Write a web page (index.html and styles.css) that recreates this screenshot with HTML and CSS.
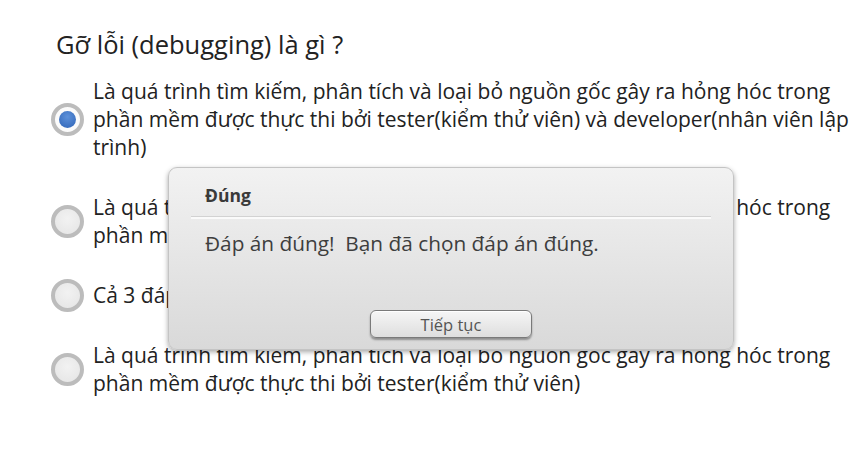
FILE: index.html
```html
<!DOCTYPE html>
<html lang="vi">
<head>
<meta charset="utf-8">
<link rel="stylesheet" href="styles.css">
</head>
<body>
<div class="quiz">
  <div class="question">Gỡ lỗi (debugging) là gì ?</div>
  <div class="options">
    <label class="option">
      <span class="radio checked"><span class="dot"></span></span>
      <span class="text">Là quá trình tìm kiếm, phân tích và loại bỏ nguồn gốc gây ra hỏng hóc trong phần mềm được thực thi bởi tester(kiểm thử viên) và developer(nhân viên lập trình)</span>
    </label>
    <label class="option">
      <span class="radio"></span>
      <span class="text">Là quá trình tìm kiếm, phân tích và loại bỏ nguồn gốc gây ra hỏng hóc trong phần mềm được thực thi bởi developer(nhân viên lập trình)</span>
    </label>
    <label class="option">
      <span class="radio"></span>
      <span class="text">Cả 3 đáp án đều sai</span>
    </label>
    <label class="option">
      <span class="radio"></span>
      <span class="text">Là quá trình tìm kiếm, phân tích và loại bỏ nguồn gốc gây ra hỏng hóc trong phần mềm được thực thi bởi tester(kiểm thử viên)</span>
    </label>
  </div>
</div>
<div class="dialog">
  <div class="dialog-title">Đúng</div>
  <div class="dialog-sep"></div>
  <div class="dialog-msg">Đáp án đúng!&nbsp; Bạn đã chọn đáp án đúng.</div>
  <div class="dialog-actions"><button class="btn">Tiếp tục</button></div>
</div>
</body>
</html>
```
FILE: styles.css
```css
html, body {
  margin: 0;
  padding: 0;
  background: #fff;
}
body {
  font-family: "Open Sans", "Noto Sans", sans-serif;
  color: #222;
  width: 863px;
  height: 453px;
  overflow: hidden;
  position: relative;
}
.quiz {
  padding: 26px 0 0 56px;
}
.question {
  font-size: 25.5px;
  line-height: 36px;
  color: #222;
}
.options {
  display: flex;
  flex-direction: column;
  gap: 32px;
  margin-top: 15px;
  width: 804px;
}
.option {
  display: flex;
  align-items: center;
  gap: 9px;
}
.radio {
  flex: none;
  box-sizing: border-box;
  width: 33px;
  height: 33px;
  margin: -3px 0 -3px -5px;
  border-radius: 50%;
  border: 4px solid #bcbcbc;
  background: radial-gradient(circle at 50% 40%, #f2f2f2, #e4e4e4);
  display: flex;
  align-items: center;
  justify-content: center;
}
.radio.checked {
  background: #fbfbfb;
}
.radio .dot {
  width: 17px;
  height: 17px;
  border-radius: 50%;
  background: radial-gradient(circle at 50% 35%, #5d91da, #2e63b6);
}
.text {
  font-size: 21px;
  line-height: 28px;
  color: #222;
}
.dialog {
  position: absolute;
  left: 168px;
  top: 167px;
  width: 566px;
  height: 183px;
  box-sizing: border-box;
  border: 1px solid #c4c4c4;
  border-radius: 9px;
  background: linear-gradient(#f2f2f2, #d9d9d9);
  box-shadow: 0 2px 5px rgba(0,0,0,0.35);
  display: flex;
  flex-direction: column;
  padding: 14px 22px 10px 22px;
}
.dialog-title {
  font-weight: bold;
  font-size: 17.5px;
  line-height: 26px;
  color: #3a3a3a;
  padding-left: 14px;
}
.dialog-sep {
  height: 2px;
  background: #fafafa;
  border-top: 1px solid #d2d2d2;
  margin-top: 8px;
}
.dialog-msg {
  font-size: 20.8px;
  line-height: 30px;
  color: #3e3e3e;
  padding-left: 14px;
  margin-top: 9px;
}
.dialog-actions {
  margin-top: auto;
  display: flex;
  justify-content: center;
}
.btn {
  width: 162px;
  height: 28px;
  border: 1px solid #7a7a7a;
  border-radius: 6px;
  background: linear-gradient(#f6f6f6, #dedede);
  box-shadow: 0 2px 2px rgba(0,0,0,0.35), inset 0 1px 0 #fff;
  font-family: "Open Sans", "Noto Sans", sans-serif;
  font-size: 16.5px;
  color: #555;
  padding: 0;
  margin-bottom: 1px;
}
```
